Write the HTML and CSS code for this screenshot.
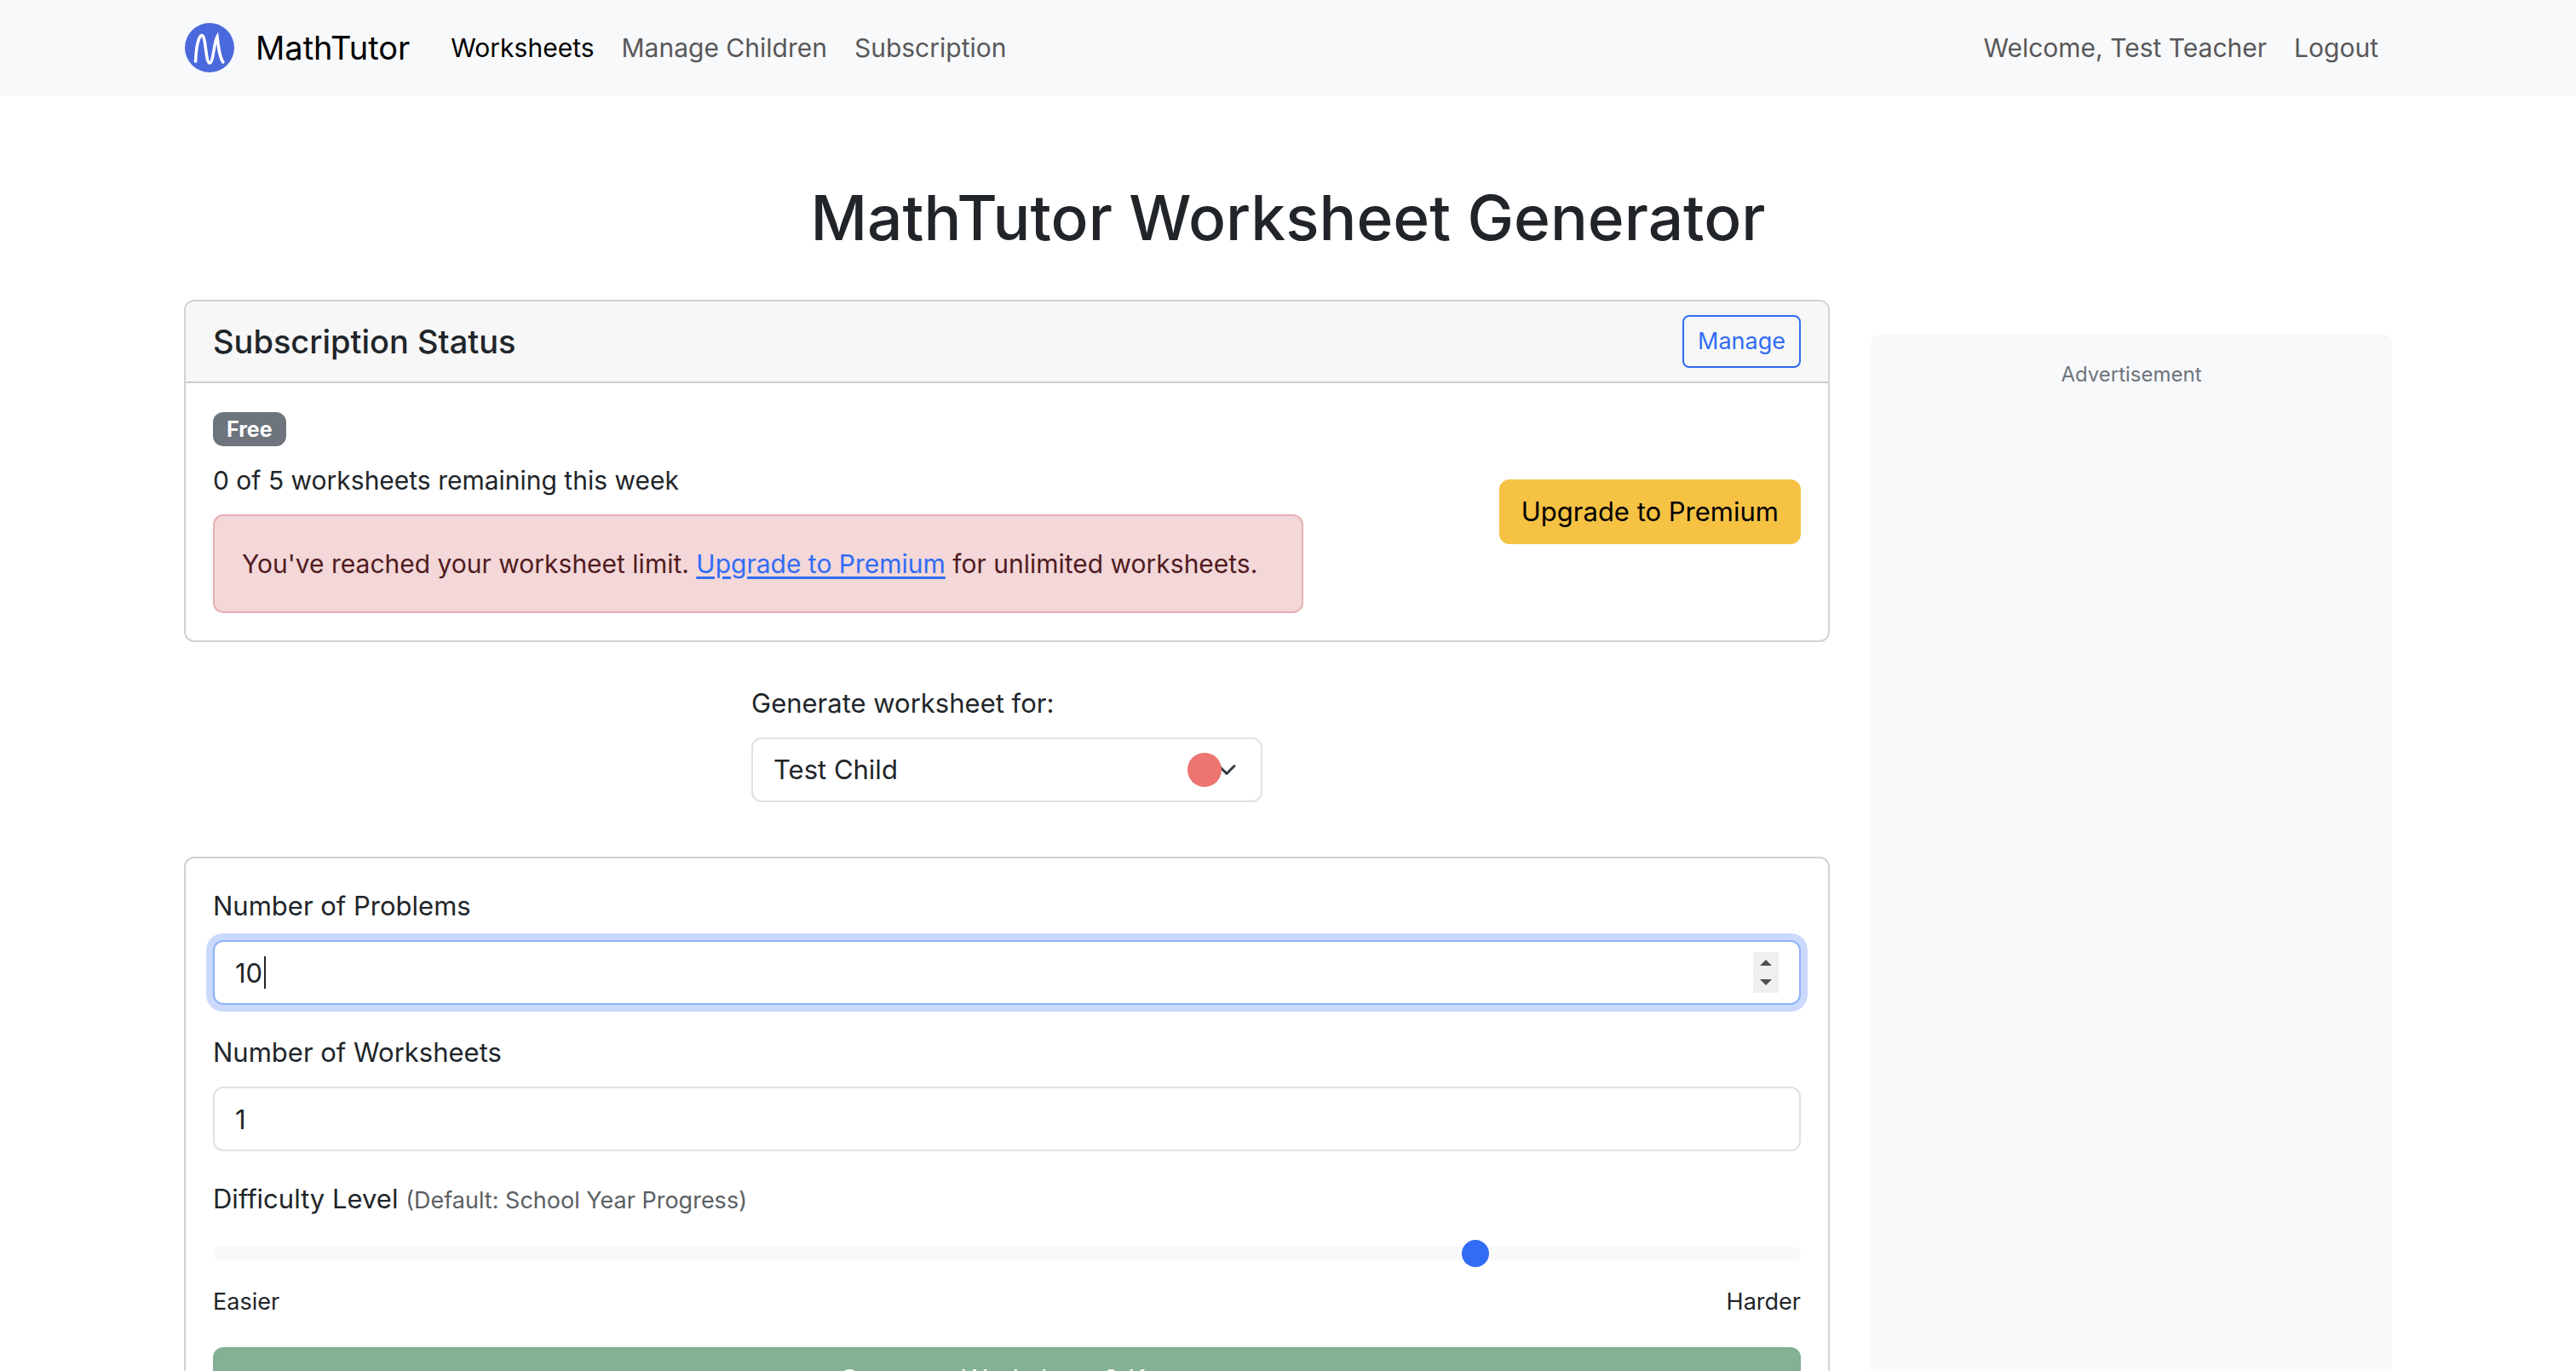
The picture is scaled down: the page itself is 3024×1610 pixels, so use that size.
FILE: index.html
```html
<!DOCTYPE html>
<html lang="en">
<head>
  <meta charset="utf-8">
  <meta name="viewport" content="width=device-width, initial-scale=1">
  <title>MathTutor Worksheet Generator</title>
  <link rel="stylesheet" href="styles.css">
</head>
<body>
  <header class="navbar">
    <nav class="container navbar-inner">
      <a class="brand" href="#">
        <svg class="brand-logo" viewBox="0 0 60 60" aria-hidden="true">
          <circle cx="30" cy="30" r="29" fill="#4a69dc"/>
          <path d="M13.500 47.500C14 34 16 18 20.500 15.500C26 13.500 25 47.500 30 48C34.500 48 35 24 39 17C40.500 30 42 44 47 48" fill="none" stroke="#fff" stroke-width="3.500"/>
        </svg>
        <span>MathTutor</span>
      </a>
      <div class="nav-links">
        <a class="nav-link active" href="#">Worksheets</a>
        <a class="nav-link" href="#">Manage Children</a>
        <a class="nav-link" href="#">Subscription</a>
      </div>
      <div class="nav-links nav-user">
        <span class="nav-link">Welcome, Test Teacher</span>
        <a class="nav-link" href="#">Logout</a>
      </div>
    </nav>
  </header>

  <main class="container">
    <h1 class="page-title">MathTutor Worksheet Generator</h1>
    <div class="layout">
      <div class="content">
        <section class="card">
          <div class="card-header">
            <h2 class="card-title">Subscription Status</h2>
            <button class="btn btn-outline" type="button">Manage</button>
          </div>
          <div class="card-body status">
            <div class="status-info">
              <span class="badge">Free</span>
              <p class="remaining">0 of 5 worksheets remaining this week</p>
              <div class="alert">You've reached your worksheet limit. <a href="#">Upgrade to Premium</a> for unlimited worksheets.</div>
            </div>
            <button class="btn btn-warning" type="button">Upgrade to Premium</button>
          </div>
        </section>

        <div class="child-picker">
          <label class="label" for="child">Generate worksheet for:</label>
          <div class="select-wrap">
            <select class="control select" id="child">
              <option>Test Child</option>
            </select>
            <span class="child-color"></span>
          </div>
        </div>

        <form class="card card-body">
          <div class="field">
            <label class="label" for="problems">Number of Problems</label>
            <div class="input-wrap">
              <input class="control focused" id="problems" type="number" value="10">
              <span class="caret"></span>
            </div>
          </div>
          <div class="field">
            <label class="label" for="worksheets">Number of Worksheets</label>
            <input class="control" id="worksheets" type="number" value="1">
          </div>
          <div class="field">
            <label class="label" for="difficulty">Difficulty Level <small class="hint">(Default: School Year Progress)</small></label>
            <input class="range" id="difficulty" type="range" min="0" max="100" value="80">
            <div class="range-ends"><span>Easier</span><span>Harder</span></div>
          </div>
          <button class="btn btn-success" type="submit" disabled>Generate Worksheet &amp; Key</button>
        </form>
      </div>

      <aside class="ad">Advertisement</aside>
    </div>
  </main>
</body>
</html>
```
FILE: styles.css
```css
*,
*::before,
*::after {
  box-sizing: border-box;
}

body {
  margin: 0;
  background: #fff;
  color: #212529;
  font-family: Inter, "Liberation Sans", sans-serif;
  font-size: 31px;
  line-height: 48px;
}

h1,
h2,
p {
  margin: 0;
  font-weight: 500;
}

.container {
  max-width: 2640px;
  margin: 0 auto;
  padding: 0 24px;
}

/* Navigation */
.navbar {
  padding: 16px 0;
  background: #f8f9fb;
}

.navbar-inner {
  display: flex;
  align-items: center;
  height: 80px;
  font-size: 30px;
}

.brand {
  display: flex;
  align-items: center;
  gap: 24px;
  margin-right: 32px;
  color: #000;
  font-size: 38px;
  text-decoration: none;
}

.brand-logo {
  width: 60px;
  height: 60px;
}

.nav-links {
  display: flex;
}

.nav-user {
  margin-left: auto;
}

.nav-link {
  padding: 0 16px;
  color: #585859;
  text-decoration: none;
}

.nav-link.active {
  color: #000;
}

/* Page */
.page-title {
  padding: 96px 0 48px;
  font-size: 73px;
  line-height: 96px;
  text-align: center;
}

.layout {
  display: grid;
  grid-template-columns: minmax(0, 1932fr) minmax(0, 612fr);
  gap: 48px;
}

.card {
  border: 2px solid #d2d2d3;
  border-radius: 12px;
  background: #fff;
}

.card-header {
  display: flex;
  align-items: center;
  justify-content: space-between;
  padding: 16px 32px;
  border-bottom: 2px solid #cbcbcc;
  border-radius: 10px 10px 0 0;
  background: #f7f7f8;
}

.card-title {
  font-size: 38px;
}

.card-body {
  padding: 32px;
}

.status {
  display: flex;
  align-items: center;
  justify-content: space-between;
}

.status-info {
  flex: 0 1 1280px;
  font-size: 30px;
}

.badge {
  display: block;
  width: fit-content;
  margin: 2px 0 16px;
  padding: 8px 16px;
  border-radius: 12px;
  background: #6d747c;
  color: #fff;
  font-size: 25px;
  font-weight: 700;
  line-height: 24px;
}

.remaining {
  margin-bottom: 16px;
  font-weight: 400;
}

.alert {
  padding: 32px;
  border: 2px solid #e7b0b4;
  border-radius: 12px;
  background: #f3d7d9;
  color: #511b20;
}

.alert a {
  color: #316cf4;
  text-underline-offset: 4px;
}

/* Buttons */
.btn {
  padding: 12px 24px;
  border: 2px solid transparent;
  border-radius: 12px;
  font: inherit;
}

.btn-outline {
  padding: 8px 16px;
  border-color: #316cf4;
  border-radius: 8px;
  background: transparent;
  color: #316cf4;
  font-size: 27px;
  line-height: 42px;
}

.btn-warning {
  border-color: #f5c244;
  background: #f5c244;
  color: #000;
}

.btn-success {
  width: 100%;
  border-color: #84b094;
  background: #84b094;
  color: #fff;
}

/* Form */
.label {
  display: block;
  margin-bottom: 16px;
}

.control {
  display: block;
  width: 100%;
  height: 76px;
  padding: 12px 24px;
  border: 2px solid #dee2e6;
  border-radius: 12px;
  outline: 0;
  background: #fff;
  color: #212529;
  font: inherit;
  appearance: none;
}

.control::-webkit-inner-spin-button {
  appearance: none;
  width: 30px;
  height: 48px;
  margin: 0;
  opacity: 0;
}

.control.focused {
  border-color: #8eb3f9;
  box-shadow: 0 0 0 8px #cbd9fd;
}

.control.focused::-webkit-inner-spin-button {
  background: #f0f0f0 url("data:image/svg+xml,%3Csvg xmlns='http://www.w3.org/2000/svg' viewBox='0 0 30 48'%3E%3Cpath d='M8 16l7-7 7 7zM8 32l7 7 7-7z' fill='%23505050'/%3E%3C/svg%3E") center / 30px 48px no-repeat;
  opacity: 1;
}

.input-wrap,
.select-wrap {
  position: relative;
}

.caret {
  position: absolute;
  top: 19px;
  left: 60px;
  width: 2px;
  height: 38px;
  background: #212529;
}

.child-picker {
  max-width: 600px;
  margin: 48px auto 64px;
}

.select {
  background: #fff url("data:image/svg+xml,%3Csvg xmlns='http://www.w3.org/2000/svg' viewBox='0 0 16 16'%3E%3Cpath fill='none' stroke='%23343a40' stroke-linecap='round' stroke-linejoin='round' stroke-width='2' d='m2 5 6 6 6-6'/%3E%3C/svg%3E") right 28px center / 24px 24px no-repeat;
}

.child-color {
  position: absolute;
  top: 18px;
  right: 48px;
  width: 40px;
  height: 40px;
  border-radius: 50%;
  background: #ed7470;
}

.field {
  margin-bottom: 32px;
}

.hint {
  color: #5b5f63;
  font-size: 27px;
  line-height: 1;
}

.range {
  display: block;
  width: 100%;
  height: 48px;
  margin: 0;
  background: transparent;
  appearance: none;
}

.range::-webkit-slider-runnable-track {
  height: 16px;
  border-radius: 8px;
  background: #f8f9fb;
}

.range::-webkit-slider-thumb {
  width: 32px;
  height: 32px;
  margin-top: -8px;
  border-radius: 50%;
  background: #316cf4;
  appearance: none;
}

.range-ends {
  display: flex;
  justify-content: space-between;
  margin-top: 12px;
  font-size: 27px;
  line-height: 42px;
}

/* Advertisement */
.ad {
  min-height: 1200px;
  margin-top: 40px;
  padding: 24px;
  border-radius: 12px;
  background: #f8f9fb;
  color: #6d747c;
  font-size: 24px;
  text-align: center;
}
```
